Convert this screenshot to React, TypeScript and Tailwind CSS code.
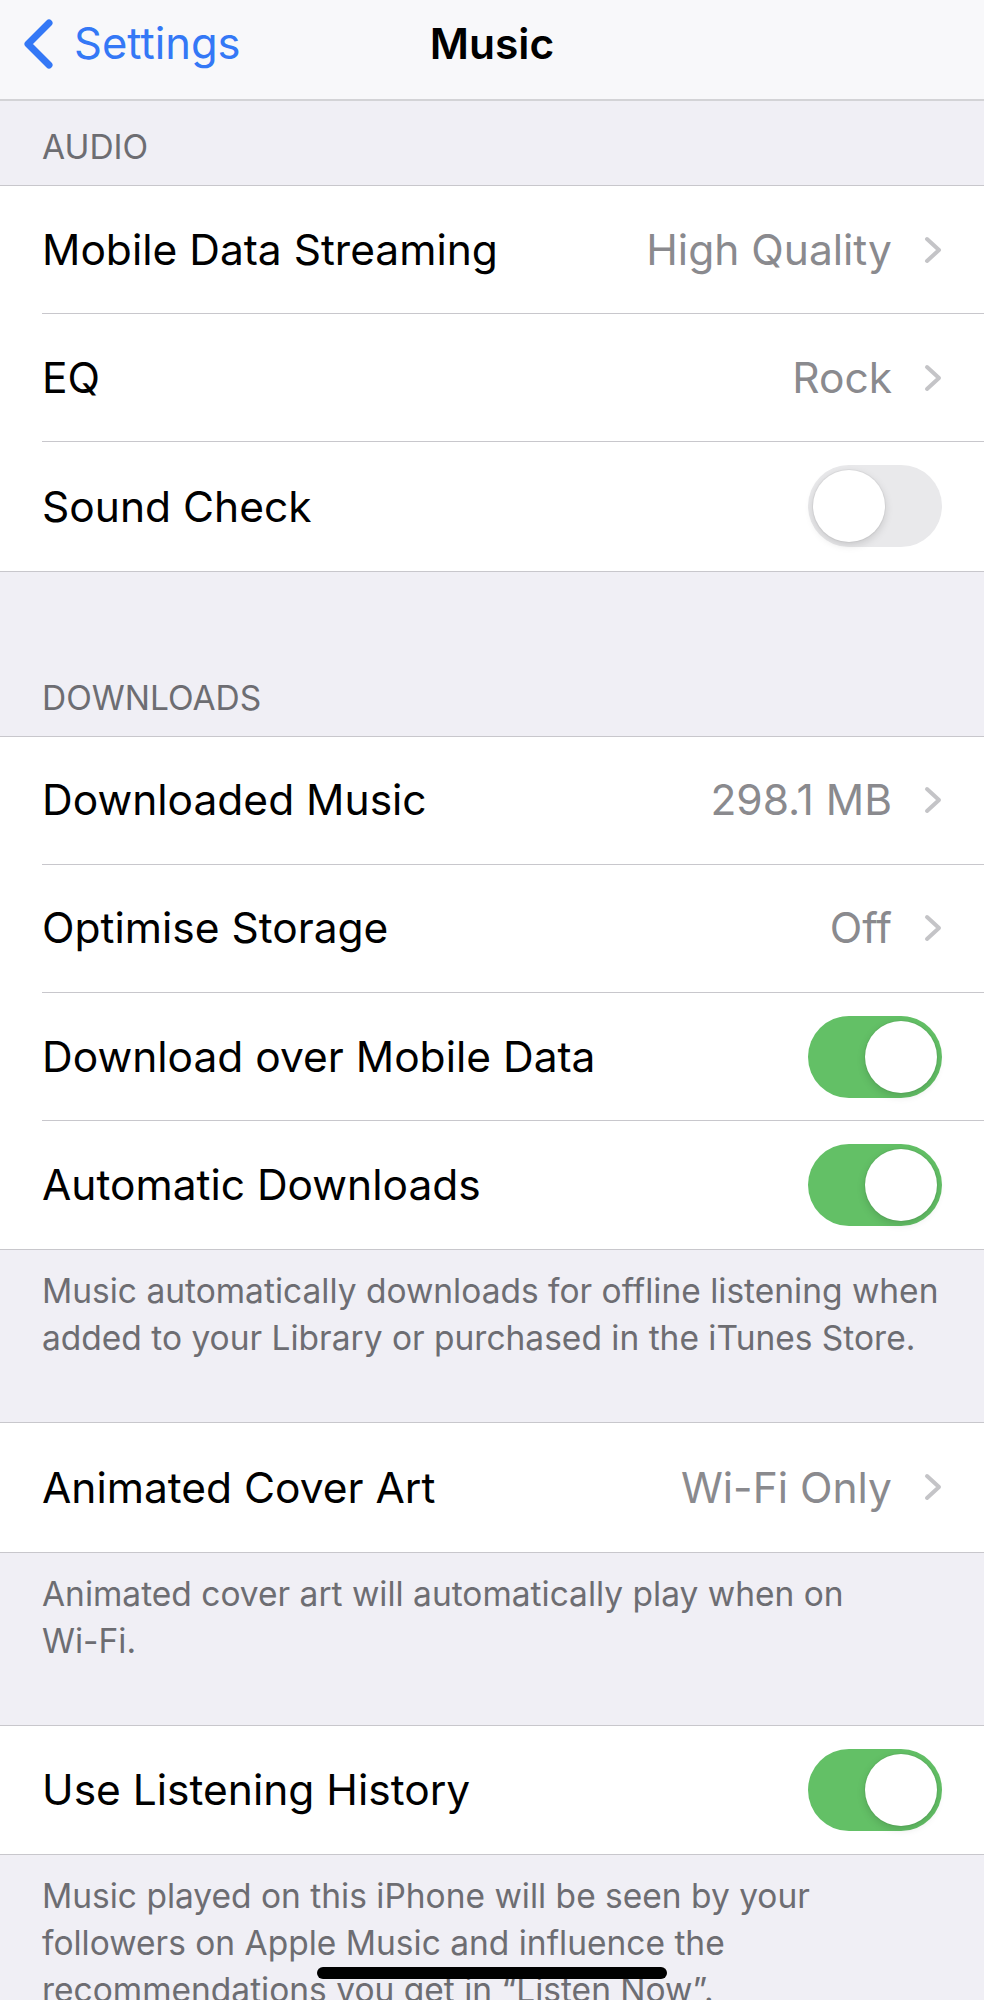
import React from "react";

const font = { fontFamily: "Inter, 'Noto Sans', sans-serif" };

function Chevron() {
  return (
    <svg width="18" height="28" viewBox="0 0 18 28" className="shrink-0">
      <polyline
        points="3,3 15,14 3,25"
        fill="none"
        stroke="#c4c4c7"
        strokeWidth="4"
        strokeLinecap="round"
        strokeLinejoin="round"
      />
    </svg>
  );
}

function Toggle({ on }: { on: boolean }) {
  return (
    <div
      className={`w-[134px] h-[82px] rounded-full p-[5px] flex shrink-0 ${
        on ? "bg-[#63c066] justify-end" : "bg-[#e9e9eb] justify-start"
      }`}
    >
      <div className="w-[72px] h-[72px] rounded-full bg-white shadow-[0_3px_8px_rgba(0,0,0,0.15),0_0_0_1px_rgba(0,0,0,0.04)]" />
    </div>
  );
}

type Row = {
  label: string;
  value?: string;
  toggle?: boolean;
};

function Group({ rows }: { rows: Row[] }) {
  return (
    <div className="bg-white border-y border-[#c8c7cc]">
      {rows.map((r, i) => (
        <div key={r.label} className="pl-[42px]">
          <div
            className={`h-[128.2px] flex items-center pr-[42px] ${
              i < rows.length - 1 ? "border-b border-[#c8c7cc]" : ""
            }`}
          >
            <span className="flex-1 text-[42.5px] text-black whitespace-nowrap">
              {r.label}
            </span>
            {r.toggle !== undefined ? (
              <Toggle on={r.toggle} />
            ) : (
              <div className="flex items-center gap-[32px]">
                <span className="text-[42.5px] text-[#8a8a8e] whitespace-nowrap">
                  {r.value}
                </span>
                <Chevron />
              </div>
            )}
          </div>
        </div>
      ))}
    </div>
  );
}

function Header({ title, top }: { title: string; top: string }) {
  return (
    <div className={`${top} pb-[21px] px-[42px]`}>
      <div className="text-[33.5px] leading-[34px] text-[#6d6d72] uppercase">
        {title}
      </div>
    </div>
  );
}

function Footer({ lines }: { lines: string[] }) {
  return (
    <div className="pt-[18px] pb-[60px] px-[42px]">
      {lines.map((l) => (
        <p key={l} className="text-[33.5px] leading-[47px] text-[#6d6d72] whitespace-nowrap">
          {l}
        </p>
      ))}
    </div>
  );
}

export default function App() {
  return (
    <div
      className="relative w-[984px] min-h-[2000px] bg-[#f0eff5] overflow-hidden"
      style={font}
    >
      {/* nav bar */}
      <div className="h-[101px] bg-[#f8f8fa] border-b-2 border-[#d3d3d6] flex items-center pb-[12px] relative">
        <div className="flex items-center pl-[22px] gap-[20px] text-[#3478f6]">
          <svg width="32" height="50" viewBox="0 0 32 50">
            <polyline
              points="27,4 6,25 27,46"
              fill="none"
              stroke="#3478f6"
              strokeWidth="7"
              strokeLinecap="round"
              strokeLinejoin="round"
            />
          </svg>
          <span className="text-[43.5px]">Settings</span>
        </div>
        <div className="absolute inset-x-0 top-0 h-[87px] flex items-center justify-center pointer-events-none">
          <span className="text-[42.5px] font-semibold text-black">Music</span>
        </div>
      </div>

      <Header title="Audio" top="pt-[29px]" />
      <Group
        rows={[
          { label: "Mobile Data Streaming", value: "High Quality" },
          { label: "EQ", value: "Rock" },
          { label: "Sound Check", toggle: false },
        ]}
      />

      <Header title="Downloads" top="pt-[109px]" />
      <Group
        rows={[
          { label: "Downloaded Music", value: "298.1 MB" },
          { label: "Optimise Storage", value: "Off" },
          { label: "Download over Mobile Data", toggle: true },
          { label: "Automatic Downloads", toggle: true },
        ]}
      />
      <Footer
        lines={[
          "Music automatically downloads for offline listening when",
          "added to your Library or purchased in the iTunes Store.",
        ]}
      />

      <Group rows={[{ label: "Animated Cover Art", value: "Wi-Fi Only" }]} />
      <Footer
        lines={["Animated cover art will automatically play when on", "Wi-Fi."]}
      />

      <Group rows={[{ label: "Use Listening History", toggle: true }]} />
      <Footer
        lines={[
          "Music played on this iPhone will be seen by your",
          "followers on Apple Music and influence the",
          "recommendations you get in “Listen Now”.",
        ]}
      />

      {/* home indicator */}
      <div className="absolute left-[317px] top-[1967px] w-[350px] h-[12px] rounded-full bg-black" />
    </div>
  );
}
